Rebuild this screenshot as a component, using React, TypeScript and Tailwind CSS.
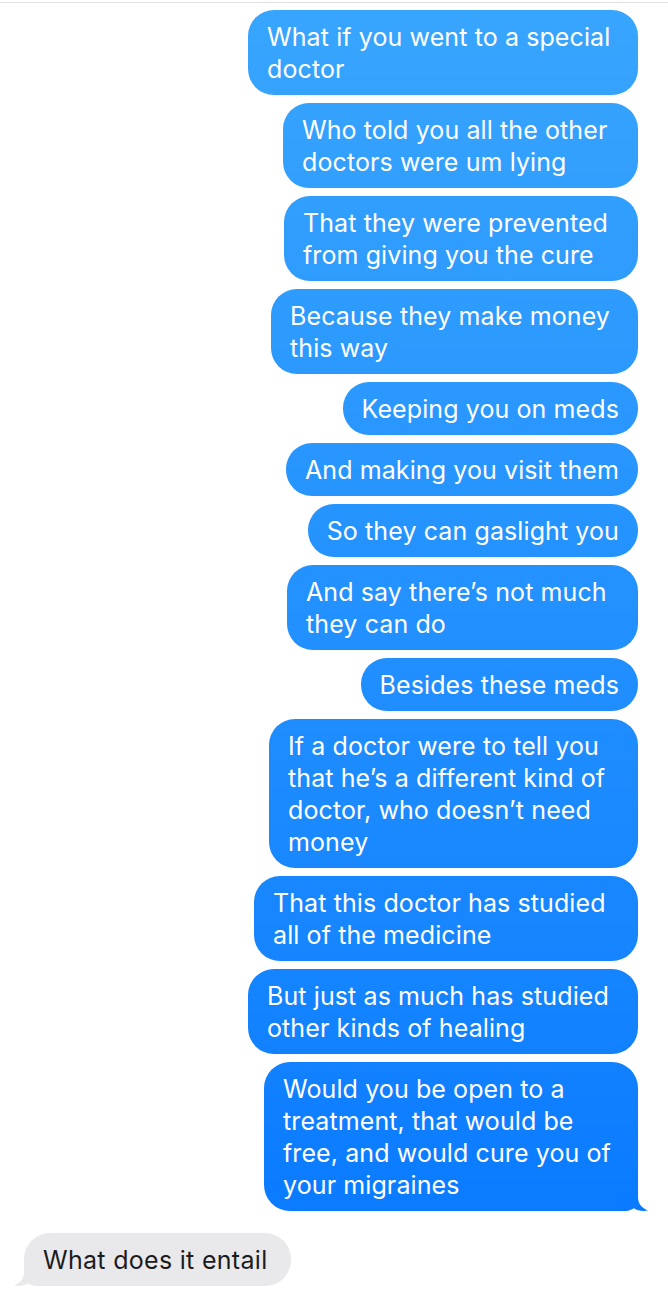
type Msg = { lines: string[]; w?: string };

// wrapped bubbles keep the width the native layout gave them
const sent: Msg[] = [
  { lines: ["What if you went to a special", "doctor"], w: "w-[390px]" },
  { lines: ["Who told you all the other", "doctors were um lying"], w: "w-[355px]" },
  { lines: ["That they were prevented", "from giving you the cure"], w: "w-[354px]" },
  { lines: ["Because they make money", "this way"], w: "w-[367px]" },
  { lines: ["Keeping you on meds"] },
  { lines: ["And making you visit them"] },
  { lines: ["So they can gaslight you"] },
  { lines: ["And say there’s not much", "they can do"], w: "w-[351px]" },
  { lines: ["Besides these meds"] },
  {
    lines: [
      "If a doctor were to tell you",
      "that he’s a different kind of",
      "doctor, who doesn’t need",
      "money",
    ],
    w: "w-[369px]",
  },
  { lines: ["That this doctor has studied", "all of the medicine"], w: "w-[384px]" },
  { lines: ["But just as much has studied", "other kinds of healing"], w: "w-[390px]" },
  {
    lines: [
      "Would you be open to a",
      "treatment, that would be",
      "free, and would cure you of",
      "your migraines",
    ],
    w: "w-[374px]",
  },
];

function SentBubble({ msg, tail }: { msg: Msg; tail?: boolean }) {
  return (
    <div
      className={`relative rounded-[26px] bg-linear-to-b from-[#38a5fd] to-[#0678ff] bg-fixed px-[19px] py-[10.5px] text-white ${
        msg.w ?? ""
      } ${tail ? "rounded-br-[14px]" : ""}`}
    >
      {msg.lines.map((l, i) => (
        <div key={i} className="whitespace-nowrap">
          {l}
        </div>
      ))}
      {tail && (
        <svg
          className="absolute bottom-0 right-[-10px]"
          width="26"
          height="24"
          viewBox="0 0 26 24"
        >
          <path
            d="M0 24 L0 4 L16 4 L16 10 C16 17 20 21 26 23.6 C20 24.6 15 23.4 12 21.2 C9 23.2 5 24 0 24 Z"
            fill="#0a7bff"
          />
        </svg>
      )}
    </div>
  );
}

export default function App() {
  return (
    <div
      className="min-h-[1300px] bg-white pt-[2px] text-[25px] leading-[32px] tracking-[0.1px]"
      style={{ fontFamily: "Inter, 'Noto Sans', sans-serif" }}
    >
      <div className="h-px bg-[#e4dfdf]" />
      <div className="flex flex-col items-end gap-2 pr-[30px] pt-[7px]">
        {sent.map((m, i) => (
          <SentBubble key={i} msg={m} tail={i === sent.length - 1} />
        ))}
      </div>
      <div className="mt-[22px] flex pl-[24px]">
        <div className="relative rounded-[26px] rounded-bl-[14px] bg-[#e9e9eb] py-[10.5px] pl-[19px] pr-[23px] tracking-[0.3px] text-[#1c1c1e]">
          What does it entail
          <svg
            className="absolute bottom-0 left-[-10px]"
            width="26"
            height="24"
            viewBox="0 0 26 24"
          >
            <path
              d="M26 24 L26 4 L10 4 L10 10 C10 17 6 21 0 23.6 C6 24.6 11 23.4 14 21.2 C17 23.2 21 24 26 24 Z"
              fill="#e9e9eb"
            />
          </svg>
        </div>
      </div>
    </div>
  );
}
